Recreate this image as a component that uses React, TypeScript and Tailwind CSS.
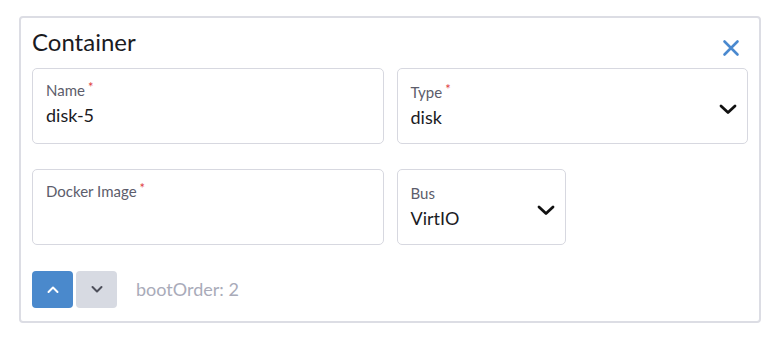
import React from "react";

interface FieldProps {
  label: string;
  value?: string;
  required?: boolean;
  select?: boolean;
  className?: string;
}

function Chevron({ className }: { className?: string }) {
  return (
    <svg width="18" height="11" viewBox="0 0 18 11" className={className}>
      <polyline
        points="2,2 9,8.5 16,2"
        fill="none"
        stroke="currentColor"
        strokeWidth="2.8"
        strokeLinecap="round"
        strokeLinejoin="round"
      />
    </svg>
  );
}

function Field({ label, value, required, select, className }: FieldProps) {
  return (
    <div
      className={`relative h-[76px] rounded-[5px] border border-[#d7d8e0] bg-white px-[13px] ${
        select ? "pt-[14px]" : "pt-[12px]"
      } ${className ?? ""}`}
    >
      <div className="flex text-[15px] leading-[18px] text-[#5c5d6b]">
        {label}
        {required && (
          <span className="ml-[3px] text-[13px] leading-[13px] text-[#e0413f]">*</span>
        )}
      </div>
      {value && (
        <div className="mt-[5px] text-[18px] leading-[22px] text-[#1b1b1f]">{value}</div>
      )}
      {select && (
        <Chevron className="absolute right-[10px] top-[35px] text-[#111]" />
      )}
    </div>
  );
}

export default function App() {
  return (
    <div
      className="min-h-[340px] bg-white pl-[19px] pt-[16px]"
      style={{ fontFamily: "Lato, 'Noto Sans', sans-serif" }}
    >
      <div className="w-[742px] rounded-[4px] border-2 border-[#dcdde4] px-[11px] pb-[13px] pt-[9px]">
        <div className="mb-[12px] flex items-end justify-between">
          <div className="text-[24px] leading-[29px] text-[#1b1b1f]">Container</div>
          <svg width="18" height="18" viewBox="0 0 18 18" className="mb-[-1px] mr-[8px] text-[#4a89cf]">
            <path
              d="M2.5 2.5 L15.5 15.5 M15.5 2.5 L2.5 15.5"
              stroke="currentColor"
              strokeWidth="2.6"
              strokeLinecap="round"
            />
          </svg>
        </div>
        <div className="grid grid-cols-2 gap-x-[13px] gap-y-[25px]">
          <Field label="Name" value="disk-5" required />
          <Field label="Type" value="disk" required select />
          <Field label="Docker Image" required />
          <Field label="Bus" value="VirtIO" select className="w-[169px]" />
        </div>
        <div className="mt-[26px] flex items-center">
          <button className="flex h-[37px] w-[41px] items-center justify-center rounded-[4px] bg-[#4a89cc] text-white">
            <svg width="14" height="9" viewBox="0 0 14 9">
              <polyline points="2.5,7 7,2.5 11.5,7" fill="none" stroke="currentColor" strokeWidth="2" strokeLinecap="round" strokeLinejoin="round" />
            </svg>
          </button>
          <button className="ml-[3px] flex h-[37px] w-[41px] items-center justify-center rounded-[4px] bg-[#d7dae2] text-[#4d4f5a]">
            <svg width="14" height="9" viewBox="0 0 14 9">
              <polyline points="2.5,2 7,6.5 11.5,2" fill="none" stroke="currentColor" strokeWidth="2" strokeLinecap="round" strokeLinejoin="round" />
            </svg>
          </button>
          <span className="ml-[19px] text-[18px] text-[#a9abb9]">bootOrder: 2</span>
        </div>
      </div>
    </div>
  );
}
